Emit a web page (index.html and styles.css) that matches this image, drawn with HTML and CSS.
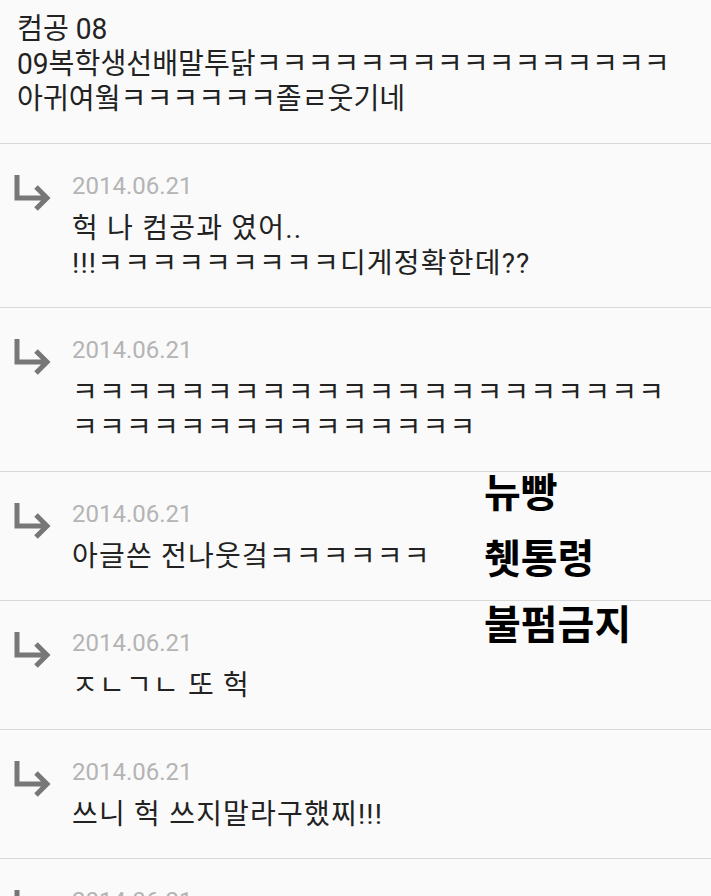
FILE: index.html
```html
<!DOCTYPE html>
<html lang="ko">
<head>
    <meta charset="UTF-8">
    <title>댓글</title>
    <meta name="viewport" content="width=device-width, initial-scale=1.0">
    <link rel="stylesheet" href="styles.css">
</head>
<body>
    <div class="post">
        <div class="post-body">컴공 08<br>09복학생선배말투닭ㅋㅋㅋㅋㅋㅋㅋㅋㅋㅋㅋㅋㅋㅋㅋㅋ<br>아귀여웤ㅋㅋㅋㅋㅋㅋ졸ㄹ웃기네</div>
    </div>

    <div class="reply">
        <svg class="reply-icon" viewBox="0 0 40 40"><path d="M5 2 V25 H34 M24 14 L35 25 L24 36"/></svg>
        <div class="reply-main">
            <div class="reply-date">2014.06.21</div>
            <div class="reply-text">헉 나 컴공과 였어..<br>!!!ㅋㅋㅋㅋㅋㅋㅋㅋㅋ디게정확한데??</div>
        </div>
    </div>

    <div class="reply">
        <svg class="reply-icon" viewBox="0 0 40 40"><path d="M5 2 V25 H34 M24 14 L35 25 L24 36"/></svg>
        <div class="reply-main">
            <div class="reply-date">2014.06.21</div>
            <div class="reply-text">ㅋㅋㅋㅋㅋㅋㅋㅋㅋㅋㅋㅋㅋㅋㅋㅋㅋㅋㅋㅋㅋㅋ<br>ㅋㅋㅋㅋㅋㅋㅋㅋㅋㅋㅋㅋㅋㅋㅋ</div>
        </div>
    </div>

    <div class="reply">
        <svg class="reply-icon" viewBox="0 0 40 40"><path d="M5 2 V25 H34 M24 14 L35 25 L24 36"/></svg>
        <div class="reply-main">
            <div class="reply-date">2014.06.21</div>
            <div class="reply-text">아글쓴 전나웃겈ㅋㅋㅋㅋㅋㅋ</div>
        </div>
    </div>

    <div class="reply">
        <svg class="reply-icon" viewBox="0 0 40 40"><path d="M5 2 V25 H34 M24 14 L35 25 L24 36"/></svg>
        <div class="reply-main">
            <div class="reply-date">2014.06.21</div>
            <div class="reply-text">ㅈㄴㄱㄴ 또 헉</div>
        </div>
    </div>

    <div class="reply">
        <svg class="reply-icon" viewBox="0 0 40 40"><path d="M5 2 V25 H34 M24 14 L35 25 L24 36"/></svg>
        <div class="reply-main">
            <div class="reply-date">2014.06.21</div>
            <div class="reply-text">쓰니 헉 쓰지말라구했찌!!!</div>
        </div>
    </div>

    <div class="reply">
        <svg class="reply-icon" viewBox="0 0 40 40"><path d="M5 2 V25 H34 M24 14 L35 25 L24 36"/></svg>
        <div class="reply-main">
            <div class="reply-date">2014.06.21</div>
            <div class="reply-text">ㅋㅋㅋ</div>
        </div>
    </div>

    <div class="watermark">뉴빵<br>췟통령<br>불펌금지</div>
</body>
</html>
```

FILE: styles.css
```css
* {
    box-sizing: border-box;
}

html, body {
    height: 100%;
    overflow: hidden;
}

body {
    margin: 0;
    background-color: #fafafa;
    font-family: Roboto, "Noto Sans CJK KR", sans-serif;
    color: #222;
    position: relative;
}

.post {
    padding: 12px 17px 26px;
    border-bottom: 1px solid #d9d9d9;
}

.post-body {
    font-size: 29px;
    line-height: 35px;
    white-space: nowrap;
    transform: scaleX(0.97);
    transform-origin: left center;
}

.reply {
    display: flex;
    padding: 28px 0 26px;
    border-bottom: 1px solid #d9d9d9;
}

.reply-icon {
    flex: none;
    width: 40px;
    height: 40px;
    margin: 1px 20px 0 12px;
    fill: none;
    stroke: #777;
    stroke-width: 5;
}

.reply-main {
    flex: 1;
}

.reply-date {
    font-size: 24px;
    line-height: 29px;
    color: #b4b4b4;
}

.reply-text {
    margin-top: 10px;
    font-size: 28px;
    line-height: 35px;
    letter-spacing: 1.2px;
    white-space: nowrap;
}

.watermark {
    position: absolute;
    left: 484px;
    top: 457px;
    font-family: "Noto Sans CJK KR", sans-serif;
    font-weight: bold;
    font-size: 40px;
    line-height: 66px;
    color: #000;
}
```
